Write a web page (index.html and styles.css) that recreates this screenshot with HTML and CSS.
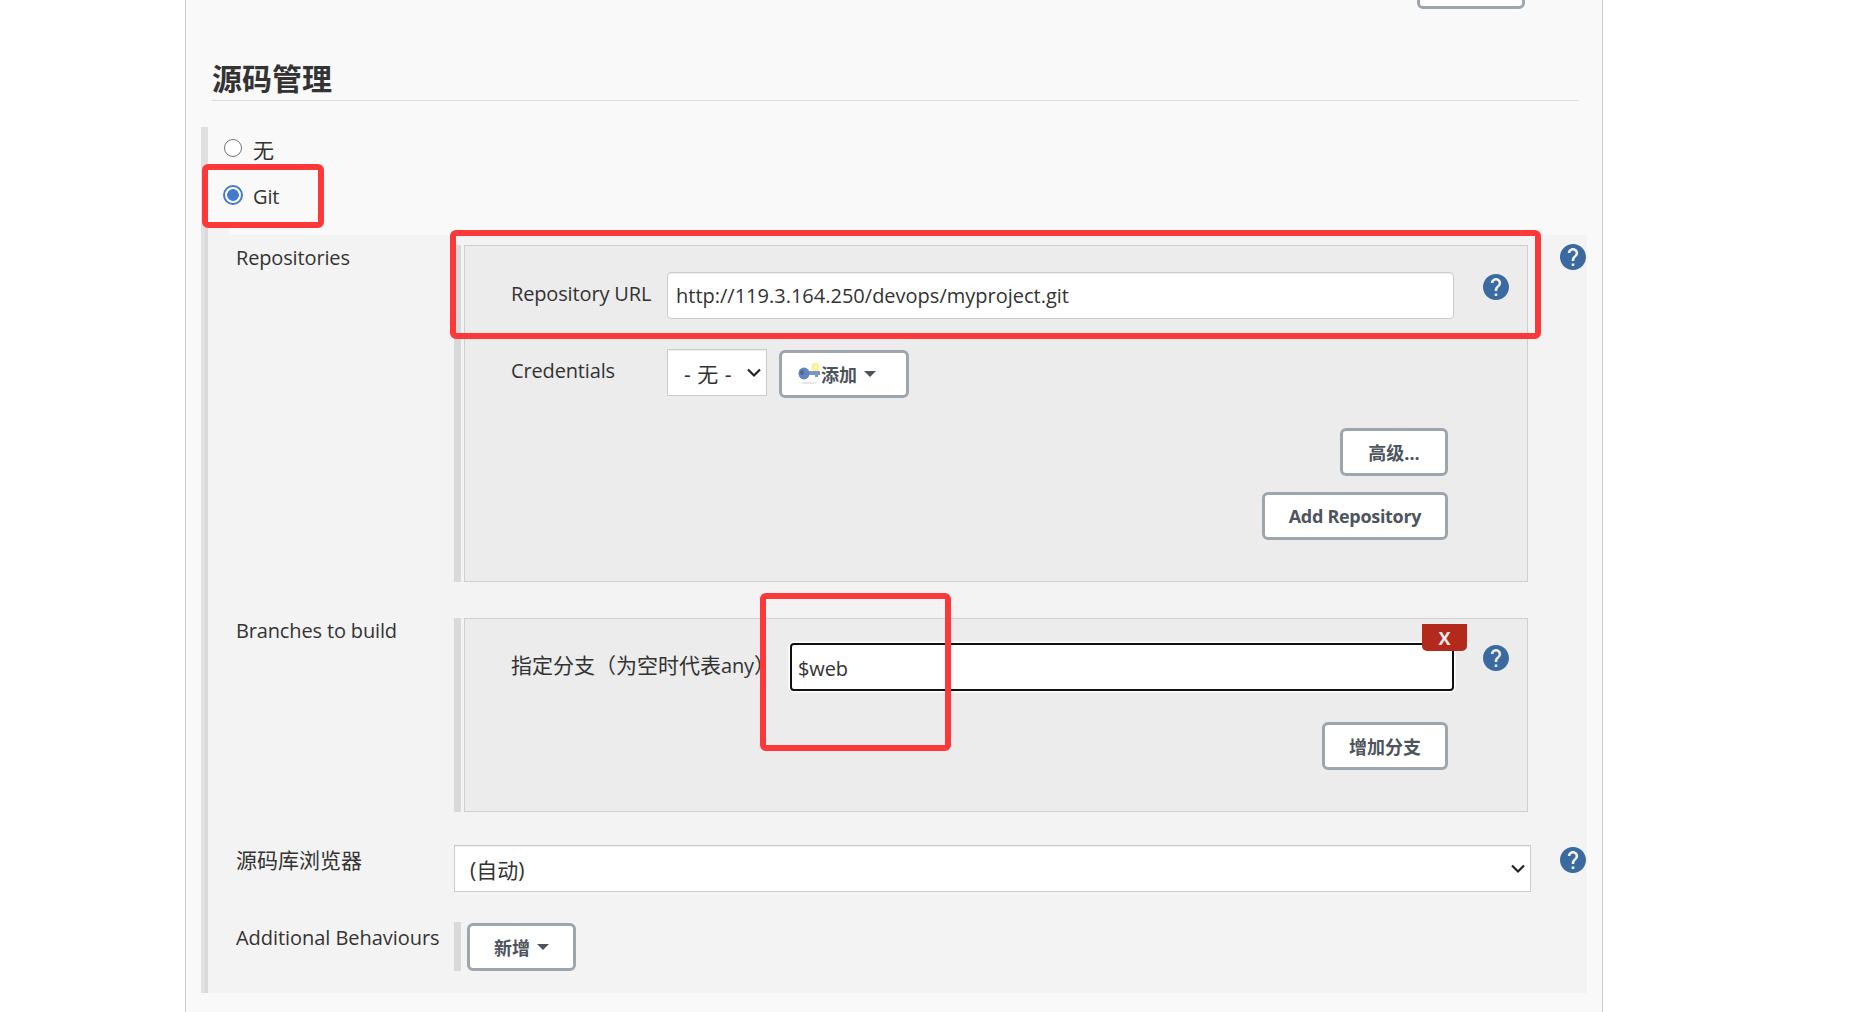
FILE: index.html
```html
<!DOCTYPE html>
<html lang="zh-CN">
<head>
  <meta charset="UTF-8">
  <meta name="viewport" content="width=device-width, initial-scale=1.0">
  <title>源码管理</title>
  <link rel="stylesheet" href="styles.css">
</head>
<body>
  <!-- Shared icons -->
  <svg class="icon-defs" width="0" height="0">
    <symbol id="help" viewBox="2 2 20 20">
      <path d="M12 2C6.48 2 2 6.48 2 12s4.48 10 10 10 10-4.48 10-10S17.52 2 12 2zm1 17h-2v-2h2v2zm2.07-7.75l-.9.92C13.45 12.9 13 13.5 13 15h-2v-.5c0-1.1.45-2.1 1.17-2.83l1.24-1.26c.37-.36.59-.86.59-1.41 0-1.1-.9-2-2-2s-2 .9-2 2H8c0-2.21 1.79-4 4-4s4 1.79 4 4c0 .88-.36 1.68-.93 2.25z"/>
    </symbol>
    <symbol id="chevron" viewBox="0 0 14 10">
      <path d="M1 1.5l6 6 6-6" fill="none" stroke="#222" stroke-width="2.2"/>
    </symbol>
  </svg>

  <main class="panel">
    <div class="previous-section">
      <button type="button" class="btn btn-advanced"></button>
    </div>

    <h2 class="section-title">源码管理</h2>

    <div class="scm">
      <label class="radio-row">
        <input type="radio" name="scm">
        <span>无</span>
      </label>
      <label class="radio-row radio-git">
        <input type="radio" name="scm" checked>
        <span class="latin">Git</span>
      </label>

      <div class="scm-form">
        <!-- Repositories -->
        <div class="row row-repos">
          <div class="label latin">Repositories</div>
          <div class="repeatable">
            <div class="chunk">
              <div class="field field-url">
                <label class="field-label latin" for="repo-url">Repository URL</label>
                <input id="repo-url" class="text-input latin" type="text" value="http://119.3.164.250/devops/myproject.git">
                <svg class="help help-inner"><use href="#help"/></svg>
              </div>
              <div class="field field-credentials">
                <label class="field-label latin" for="credentials">Credentials</label>
                <div class="select select-small">
                  <select id="credentials"><option>- 无 -</option></select>
                  <svg class="chevron"><use href="#chevron"/></svg>
                </div>
                <button type="button" class="btn btn-add">
                  <svg class="key" width="23" height="22" viewBox="0 0 23 22">
                    <ellipse cx="11" cy="20" rx="9" ry="1.2" fill="#e6e6e6"/>
                    <circle cx="17.5" cy="4" r="4" fill="#f7f28a"/>
                    <circle cx="17.5" cy="4" r="1.6" fill="#fffcc8"/>
                    <path d="M9 8h13v4h-2v2h-3v-2H9z" fill="#7a96c8"/>
                    <ellipse cx="6" cy="10.500" rx="5.500" ry="6" fill="#6484bd"/>
                    <ellipse cx="4" cy="9.500" rx="2" ry="2.500" fill="#48689f"/>
                  </svg>添加<i class="caret"></i>
                </button>
              </div>
              <div class="actions actions-repo">
                <button type="button" class="btn btn-advanced">高级...</button>
                <button type="button" class="btn btn-repo latin">Add Repository</button>
              </div>
            </div>
          </div>
          <svg class="help"><use href="#help"/></svg>
        </div>

        <!-- Branches -->
        <div class="row row-branches">
          <div class="label latin">Branches to build</div>
          <div class="repeatable">
            <div class="chunk">
              <button type="button" class="delete latin">X</button>
              <div class="field field-branch">
                <label class="field-label" for="branch">指定分支（为空时代表<span class="latin">any</span>）</label>
                <input id="branch" class="text-input focused latin" type="text" value="$web">
                <svg class="help help-inner"><use href="#help"/></svg>
              </div>
              <div class="actions actions-branch">
                <button type="button" class="btn btn-branch">增加分支</button>
              </div>
            </div>
          </div>
        </div>

        <!-- Repository browser -->
        <div class="row row-browser">
          <label class="label" for="browser">源码库浏览器</label>
          <div class="select">
            <select id="browser"><option>(自动)</option></select>
            <svg class="chevron"><use href="#chevron"/></svg>
          </div>
          <svg class="help"><use href="#help"/></svg>
        </div>

        <!-- Additional behaviours -->
        <div class="row row-behaviours">
          <div class="label latin">Additional Behaviours</div>
          <div class="repeatable">
            <button type="button" class="btn btn-new">新增<i class="caret"></i></button>
          </div>
        </div>
      </div>
    </div>
  </main>

  <!-- Highlights over the form -->
  <div class="mark mark-git"></div>
  <div class="mark mark-url"></div>
  <div class="mark mark-branch"></div>
</body>
</html>
```

FILE: styles.css
```css
* {
  box-sizing: border-box;
}
body {
  margin: 0;
  height: 1012px;
  overflow: hidden;
  position: relative;
  background: #fff;
  color: #333;
  font-family: "Open Sans", "Noto Sans CJK SC", sans-serif;
  font-size: 21px;
  line-height: 30px;
}
button, input, select {
  font-family: inherit;
  color: inherit;
  margin: 0;
}
.icon-defs {
  position: absolute;
}
.latin {
  font-size: 20px;
  letter-spacing: -0.15px;
}
.panel {
  width: 1418px;
  height: 1012px;
  margin-left: 185px;
  padding: 0 15px;
  background: #f9f9f9;
  border: 1px solid #ccc;
  border-width: 0 1px;
  overflow: hidden;
}

/* Heading */
.previous-section {
  height: 9px;
  display: flex;
  justify-content: flex-end;
  align-items: flex-end;
  padding-right: 62px;
}
.section-title {
  margin: 0 8px 26px 11px;
  height: 92px;
  padding-top: 47px;
  border-bottom: 1px solid #ddd;
  font-size: 30px;
  font-weight: 700;
  line-height: 46px;
}

/* Source code management block */
.scm {
  height: 866px;
  border-left: 7px solid #e0e0e0;
}
.radio-row {
  display: flex;
  gap: 11px;
  height: 47px;
  padding: 8px 0 0 16px;
}
.radio-row input {
  appearance: none;
  width: 18px;
  height: 18px;
  margin-top: 4px;
  border: 1.5px solid #767676;
  border-radius: 50%;
  background: #fff;
}
.radio-row input:checked {
  width: 20px;
  height: 20px;
  margin: 3px -1px 0;
  border: 2px solid #4379cf;
  background: radial-gradient(circle, #4379cf 5.500px, #fff 6.200px);
}
.radio-git {
  height: 51px;
}
.scm-form {
  height: 768px;
  margin-left: -3px;
  padding: 20px 0 0 29px;
  border-left: 3px solid #d9d9d9;
  background: linear-gradient(#f9f9f9, #f9f9f9) 21px 0 / 100% 10px no-repeat #f3f3f3;
}
.row {
  display: grid;
  grid-template-columns: 217px 1077px 26px;
}
.row > .help {
  margin-left: 29px;
}
.row-repos {
  height: 337px;
  margin-bottom: 36px;
}
.row-branches {
  height: 194px;
  margin-bottom: 33px;
}
.row-browser {
  height: 47px;
  margin-bottom: 30px;
}
.row-behaviours {
  height: 49px;
}
.label {
  margin: -2px 0 0 -1px;
}
.row-browser .label {
  margin-top: 0;
}
.row-behaviours .label {
  margin-top: 1px;
  letter-spacing: -0.05px;
}
.repeatable {
  padding: 0 3px;
  border-left: 7px solid #d9d9d9;
}
.chunk {
  height: 100%;
  position: relative;
  border: 1px solid #d0d0d0;
  background: #ececec;
}

/* Fields */
.field {
  display: flex;
  padding-left: 46px;
}
.field-label {
  width: 156px;
  flex: none;
  white-space: nowrap;
}
.text-input {
  width: 787px;
  height: 47px;
  padding: 0 8px;
  border: 1px solid #ccc;
  border-radius: 4px;
  background: #fff;
  box-shadow: inset 0 1px 1px rgba(0, 0, 0, 0.075);
}
.field-url {
  padding-top: 26px;
}
.field-url .text-input {
  letter-spacing: 0;
}
.field-url .field-label {
  padding-top: 7px;
}
.field-credentials {
  padding-top: 30px;
}
.field-credentials .field-label {
  padding-top: 7px;
}
.field-branch {
  padding-top: 24px;
}
.field-branch .field-label {
  width: 279px;
  padding-top: 7px;
}
.field-branch .text-input {
  width: 664px;
  height: 48px;
  padding: 2px 6px 0;
  outline: none;
}
.text-input.focused {
  border: 2px solid #101010;
  box-shadow: 0 0 0 1.5px #fff;
}
.help {
  width: 26px;
  height: 26px;
  fill: #3a6a9f;
}
.row > .help {
  margin-top: -1px;
}
.row-browser > .help {
  margin-top: 2px;
}
.help-inner {
  margin: 2px 0 0 29px;
}
.select {
  position: relative;
  height: 47px;
}
.select select {
  appearance: none;
  width: 100%;
  height: 47px;
  padding: 3px 15px 0;
  border: 1px solid #ccc;
  border-radius: 0;
  background: #fff;
  box-shadow: inset 0 1px 1px rgba(0, 0, 0, 0.075);
  font-size: 21px;
}
.select-small {
  width: 100px;
  margin-right: 12px;
}
.select-small select {
  padding-left: 16px;
  word-spacing: 1px;
}
.chevron {
  position: absolute;
  right: 6px;
  top: 19px;
  width: 14px;
  height: 10px;
}

/* Buttons */
.btn {
  flex: none;
  display: flex;
  align-items: center;
  justify-content: center;
  height: 48px;
  padding: 0 0 1px;
  border: 3px solid #9da6ae;
  border-radius: 6px;
  background: #fff;
  color: #4d545d;
  font-size: 18px;
  font-weight: 700;
}
.btn-advanced {
  width: 108px;
}
.btn-repo {
  width: 186px;
  letter-spacing: -0.3px;
}
.btn-branch {
  width: 126px;
}
.btn-add {
  width: 130px;
  margin-top: 1px;
  padding-right: 14px;
}
.btn-new {
  width: 109px;
  margin: 1px 0 0 3px;
}
.caret {
  margin-left: 7px;
  border: 6px solid transparent;
  border-top-color: #4d545d;
  border-bottom: 0;
}
.actions {
  display: flex;
  flex-direction: column;
  align-items: flex-end;
  gap: 16px;
  padding-right: 79px;
}
.actions-repo {
  padding-top: 30px;
}
.actions-branch {
  padding-top: 31px;
}
.delete {
  position: absolute;
  top: 5px;
  right: 60px;
  z-index: 1;
  width: 45px;
  height: 27px;
  padding: 0;
  border: 0;
  border-radius: 0 0 5px 5px;
  background: #b32a1c;
  color: #eee;
  font-size: 18px;
  font-weight: 700;
}

/* Highlights */
.mark {
  position: absolute;
  z-index: 2;
  border: 6px solid #fd3838;
  border-radius: 6px;
}
.mark-git {
  left: 202px;
  top: 164px;
  width: 122px;
  height: 64px;
}
.mark-url {
  left: 450px;
  top: 230px;
  width: 1091px;
  height: 109px;
}
.mark-branch {
  left: 760px;
  top: 593px;
  width: 191px;
  height: 158px;
}
```
